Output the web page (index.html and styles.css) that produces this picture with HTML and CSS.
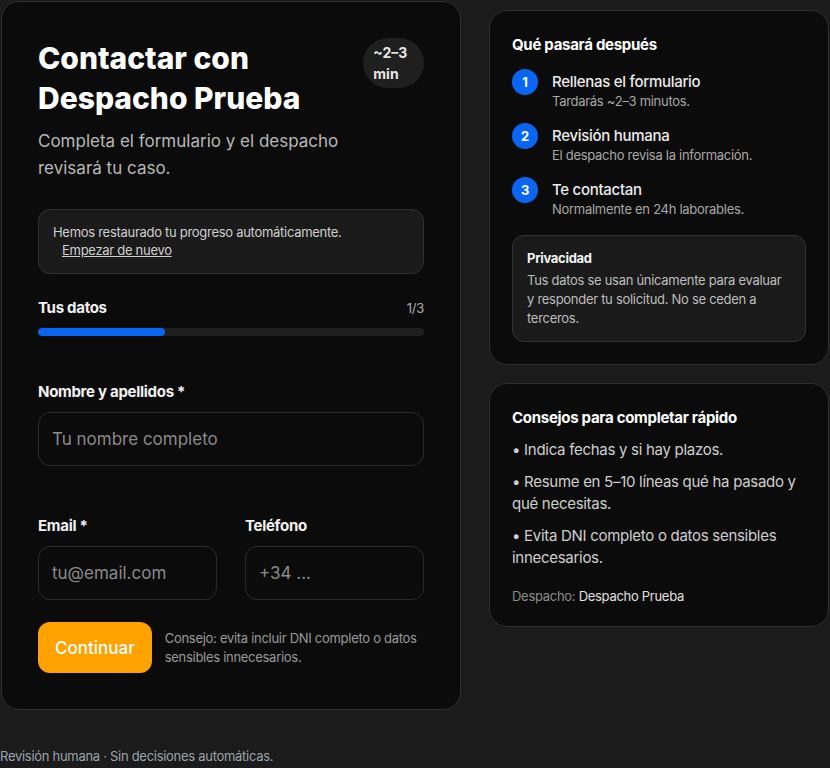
FILE: index.html
```html
<!DOCTYPE html>
<html lang="es">
<head>
  <meta charset="UTF-8">
  <meta name="viewport" content="width=device-width, initial-scale=1.0">
  <title>Contactar con Despacho Prueba</title>
  <link rel="stylesheet" href="styles.css">
</head>
<body>
  <div class="layout">
    <!-- Formulario -->
    <main class="card form-card">
      <div class="form-head">
        <h1>Contactar con Despacho Prueba</h1>
        <span class="badge">~2–3 min</span>
      </div>
      <p class="lead">Completa el formulario y el despacho revisará tu caso.</p>

      <div class="notice">
        Hemos restaurado tu progreso automáticamente.
        <a href="#" class="notice-link">Empezar de nuevo</a>
      </div>

      <div class="step-head">
        <strong>Tus datos</strong>
        <span>1/3</span>
      </div>
      <div class="progress"><div class="progress-fill" style="width: 33%"></div></div>

      <div class="field">
        <label for="nombre">Nombre y apellidos *</label>
        <input id="nombre" type="text" placeholder="Tu nombre completo">
      </div>

      <div class="field-row">
        <div class="field">
          <label for="email">Email *</label>
          <input id="email" type="email" placeholder="tu@email.com">
        </div>
        <div class="field">
          <label for="tel">Teléfono</label>
          <input id="tel" type="tel" placeholder="+34 ...">
        </div>
      </div>

      <div class="actions">
        <button class="btn-primary">Continuar</button>
        <p class="hint">Consejo: evita incluir DNI completo o datos sensibles innecesarios.</p>
      </div>
    </main>

    <!-- Lateral -->
    <aside class="side">
      <section class="card side-card">
        <h2>Qué pasará después</h2>
        <ol class="steps">
          <li>
            <span class="num">1</span>
            <div>
              <div class="step-title">Rellenas el formulario</div>
              <div class="step-sub">Tardarás ~2–3 minutos.</div>
            </div>
          </li>
          <li>
            <span class="num">2</span>
            <div>
              <div class="step-title">Revisión humana</div>
              <div class="step-sub">El despacho revisa la información.</div>
            </div>
          </li>
          <li>
            <span class="num">3</span>
            <div>
              <div class="step-title">Te contactan</div>
              <div class="step-sub">Normalmente en 24h laborables.</div>
            </div>
          </li>
        </ol>
        <div class="privacy">
          <h3>Privacidad</h3>
          <p>Tus datos se usan únicamente para evaluar y responder tu solicitud. No se ceden a terceros.</p>
        </div>
      </section>

      <section class="card side-card">
        <h2>Consejos para completar rápido</h2>
        <p class="tip">• Indica fechas y si hay plazos.</p>
        <p class="tip">• Resume en 5–10 líneas qué ha pasado y qué necesitas.</p>
        <p class="tip">• Evita DNI completo o datos sensibles innecesarios.</p>
        <p class="firm">Despacho: <span>Despacho Prueba</span></p>
      </section>
    </aside>
  </div>

  <footer class="footer">Revisión humana · Sin decisiones automáticas.</footer>
</body>
</html>
```

FILE: styles.css
```css
body {
  margin: 0;
  background: #1b1b1b;
  color: #f2f2f2;
  font-family: Inter, "Noto Sans", sans-serif;
  letter-spacing: -0.018em;
}
.layout {
  display: grid;
  grid-template-columns: 460px 340px;
  gap: 28px;
  align-items: start;
  padding: 1px 0 0 1px;
}
.card {
  background: #0b0b0b;
  border: 1px solid #2f2f2f;
  border-radius: 18px;
}
.form-card {
  padding: 36px;
}
.form-head {
  display: flex;
  align-items: flex-start;
  gap: 14px;
}
.form-head h1 {
  margin: 0;
  font-size: 30px;
  line-height: 40px;
  font-weight: 800;
  letter-spacing: 0;
  color: #fff;
}
.badge {
  background: #1f1f1f;
  border-radius: 999px;
  padding: 4px 10px;
  font-size: 14px;
  font-weight: 700;
  line-height: 21px;
  letter-spacing: 0;
  color: #e6e6e6;
}
.lead {
  max-width: 330px;
  margin: 10px 0 27px;
  font-size: 17px;
  line-height: 27px;
  letter-spacing: 0;
  color: #b8b8b8;
}
.notice {
  background: #1a1a1a;
  border: 1px solid #303030;
  border-radius: 12px;
  padding: 13px 14px 14px;
  font-size: 13px;
  line-height: 18px;
  color: #cfcfcf;
}
.notice-link {
  display: block;
  padding-left: 9px;
  color: #cfcfcf;
}
.step-head {
  display: flex;
  justify-content: space-between;
  align-items: baseline;
  margin-top: 24px;
}
.step-head strong {
  font-size: 15px;
  font-weight: 700;
}
.step-head span {
  font-size: 13px;
  color: #a8a8a8;
}
.progress {
  margin-top: 11px;
  height: 8px;
  background: #1f1f1f;
  border-radius: 4px;
  overflow: hidden;
}
.progress-fill {
  height: 100%;
  background: #0a66f2;
  border-radius: 4px;
}
.field {
  margin-top: 46px;
}
.field label {
  display: block;
  font-size: 15px;
  font-weight: 700;
  margin-bottom: 11px;
}
.field input {
  box-sizing: border-box;
  width: 100%;
  height: 54px;
  padding: 0 13px;
  background: #0b0b0b;
  border: 1px solid #2b2b2b;
  border-radius: 12px;
  font-family: inherit;
  font-size: 17px;
  letter-spacing: 0;
  color: #eee;
}
.field input::placeholder {
  color: #8a8a8a;
}
.field-row {
  display: grid;
  grid-template-columns: 1fr 1fr;
  gap: 28px;
}
.field-row .field {
  margin-top: 50px;
}
.actions {
  display: flex;
  align-items: center;
  gap: 13px;
  margin-top: 22px;
}
.btn-primary {
  flex-shrink: 0;
  background: #ffa200;
  border: none;
  border-radius: 12px;
  height: 51px;
  padding: 0 17px;
  font-family: inherit;
  font-size: 17px;
  font-weight: 500;
  color: #fff;
}
.hint {
  margin: 0;
  font-size: 13px;
  line-height: 19px;
  color: #9a9a9a;
}
.side {
  display: flex;
  flex-direction: column;
  gap: 18px;
  margin-top: 9px;
}
.side-card {
  padding: 23px 22px 22px;
}
.side-card h2 {
  margin: 0;
  font-size: 15px;
  font-weight: 700;
  line-height: 22px;
  color: #fff;
}
.tips-card {
  padding-top: 25px;
}
.steps {
  list-style: none;
  margin: 16px 0 0;
  padding: 0;
}
.steps li {
  display: flex;
  gap: 14px;
  margin-bottom: 16px;
}
.num {
  flex-shrink: 0;
  width: 26px;
  height: 26px;
  border-radius: 50%;
  background: #0a66f2;
  color: #fff;
  font-size: 13px;
  font-weight: 700;
  display: flex;
  align-items: center;
  justify-content: center;
  margin-top: -3px;
}
.step-title {
  font-size: 15px;
  font-weight: 500;
  line-height: 20px;
  color: #ececec;
}
.step-sub {
  font-size: 13px;
  line-height: 18px;
  color: #a8a8a8;
}
.privacy {
  margin-top: 17px;
  background: #1a1a1a;
  border: 1px solid #333;
  border-radius: 12px;
  padding: 13px 14px 13px;
}
.privacy h3 {
  margin: 0 0 4px;
  font-size: 13px;
  font-weight: 700;
  line-height: 18px;
}
.privacy p {
  margin: 0;
  font-size: 13px;
  line-height: 19px;
  color: #bdbdbd;
}
.tip {
  margin: 10px 0 0;
  font-size: 15px;
  line-height: 22px;
  color: #cfcfcf;
}
.firm {
  margin: 19px 0 0;
  font-size: 13px;
  color: #8c8c8c;
}
.firm span {
  color: #e0e0e0;
}
.footer {
  margin-top: 38px;
  font-size: 13px;
  color: #9aa3ad;
}
```
